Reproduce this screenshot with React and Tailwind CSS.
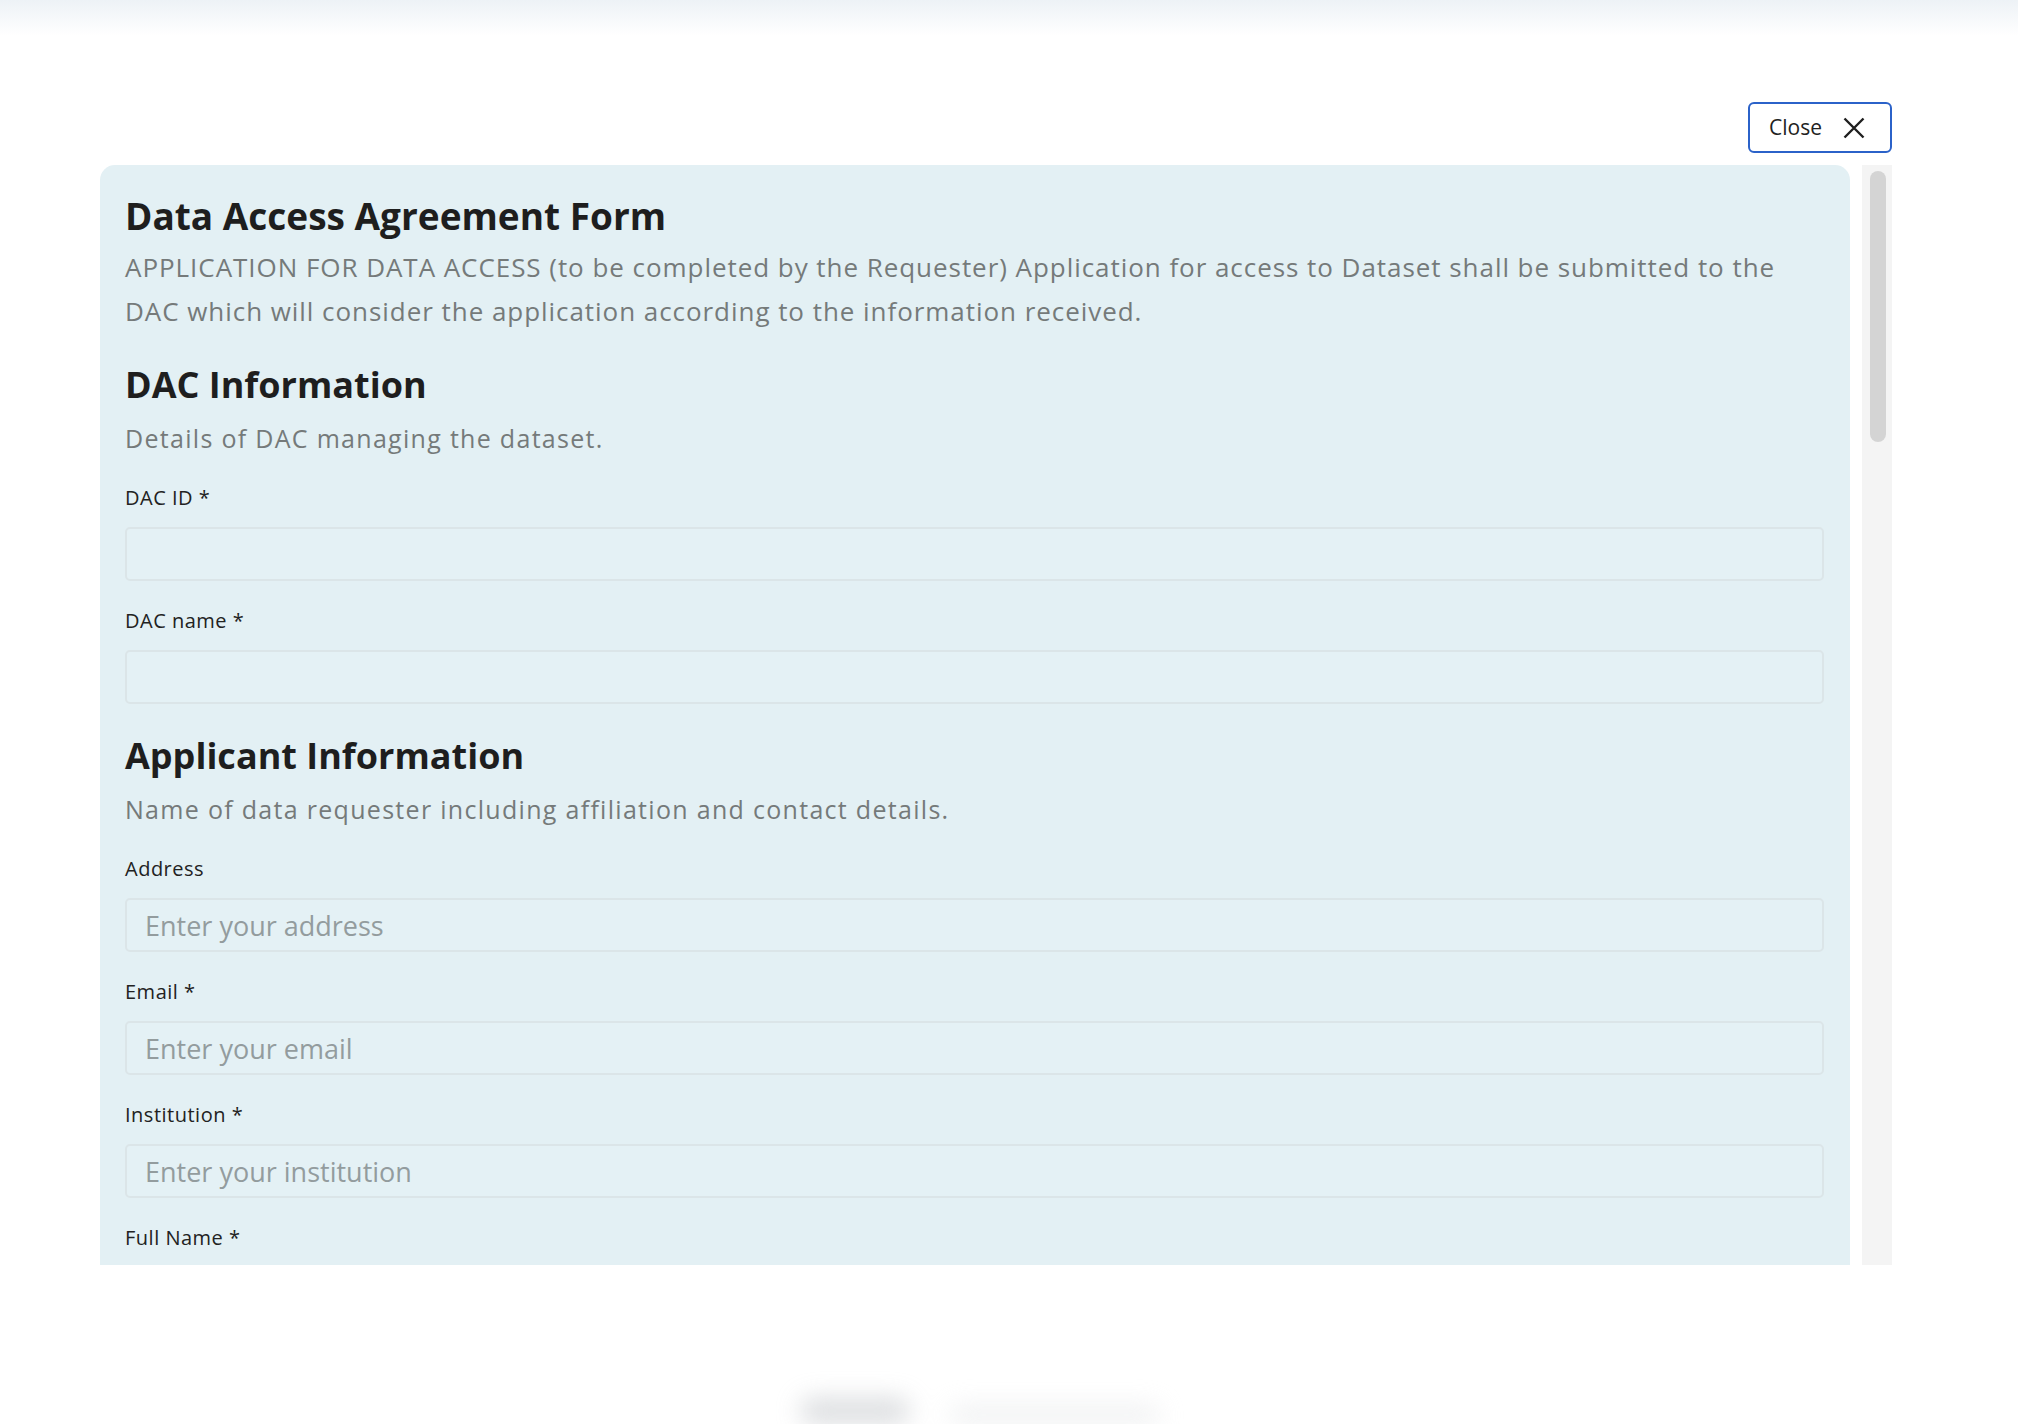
import React from 'react';

const fields = {
  dac: [
    { label: 'DAC ID *', placeholder: '' },
    { label: 'DAC name *', placeholder: '' },
  ],
  applicant: [
    { label: 'Address', placeholder: 'Enter your address' },
    { label: 'Email *', placeholder: 'Enter your email' },
    { label: 'Institution *', placeholder: 'Enter your institution' },
    { label: 'Full Name *', placeholder: 'Enter your full name' },
  ],
};

const Field = ({ label, placeholder }) => (
  <div className="flex flex-col">
    <label className="text-[20px] leading-[28px] font-medium tracking-[0.5px] text-[#222]">{label}</label>
    <input
      type="text"
      placeholder={placeholder}
      className="mt-[15px] h-[54px] w-full rounded-[5px] border-2 border-[#dbe5e8] bg-[#e4f1f5] px-[18px] text-[27px] font-normal text-[#333] placeholder:text-[#939c9e] outline-none"
    />
  </div>
);

const Section = ({ title, subtitle, items }) => (
  <div className="flex flex-col">
    <h2 className="text-[36px] leading-[44px] font-bold text-[#1e1e1e]">{title}</h2>
    <p className="mt-[13px] text-[25px] leading-[36px] tracking-[1.3px] text-[#757a7a]">{subtitle}</p>
    <div className="mt-[28px] flex flex-col gap-[26px]">
      {items.map((f) => (
        <Field key={f.label} {...f} />
      ))}
    </div>
  </div>
);

const CloseIcon = () => (
  <svg width="22" height="22" viewBox="0 0 22 22" fill="none" stroke="#1f1f1f" strokeWidth="2.4">
    <path d="M1.5 1.5 L20.5 20.5 M20.5 1.5 L1.5 20.5" />
  </svg>
);

export default function App() {
  return (
    <div className="flex h-[1424px] w-full flex-col overflow-hidden bg-white font-['Open_Sans','Liberation_Sans',sans-serif]">
      {/* faint header behind the overlay */}
      <div className="h-[36px] w-full shrink-0 bg-linear-to-b from-[#edf2f6] to-white" />

      <div className="ml-[100px] flex w-[1792px] flex-col">
        {/* Close button row */}
        <div className="mt-[66px] flex justify-end">
          <button className="flex h-[51px] items-center gap-[21px] rounded-[6px] border-2 border-[#2b62c9] bg-white pl-[19px] pr-[25px] text-[21px] text-[#222]">
            Close
            <CloseIcon />
          </button>
        </div>

        {/* Form panel + scrollbar */}
        <div className="mt-[12px] flex h-[1100px] gap-[12px]">
          <div className="flex-1 overflow-hidden rounded-t-[15px] bg-[#e3f0f4] pl-[25px] pr-[26px] pt-[28px]">
            <h1 className="text-[37px] leading-[46px] font-bold text-[#1e1e1e]">Data Access Agreement Form</h1>
            <p className="mt-[6px] text-[26px] leading-[44px] tracking-[0.95px] text-[#757a7a]">
              APPLICATION FOR DATA ACCESS (to be completed by the Requester) Application for access to Dataset shall be submitted to the DAC which will consider the application according to the information received.
            </p>
            <div className="mt-[30px]">
              <Section title="DAC Information" subtitle="Details of DAC managing the dataset." items={fields.dac} />
            </div>
            <div className="mt-[30px]">
              <Section
                title="Applicant Information"
                subtitle="Name of data requester including affiliation and contact details."
                items={fields.applicant}
              />
            </div>
          </div>
          <div className="w-[30px] bg-[#f4f4f4] pt-[6px] pl-[8px]">
            <div className="h-[271px] w-[16px] rounded-full bg-[#d4d4d4]" />
          </div>
        </div>
      </div>

      {/* blurred page content peeking below the overlay */}
      <div className="mt-auto flex h-[40px] items-end gap-[40px] pl-[800px] opacity-60 blur-md">
        <div className="h-[26px] w-[110px] rounded-full bg-[#c4c7cb]" />
        <div className="h-[18px] w-[210px] rounded-full bg-[#e4e6e8]" />
      </div>
    </div>
  );
}
